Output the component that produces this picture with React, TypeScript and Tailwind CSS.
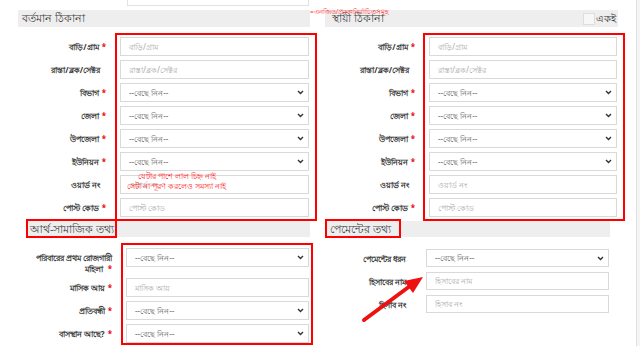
import React from "react";

const FONT = { fontFamily: '"Noto Sans", "DejaVu Sans", sans-serif' };

function Chevron() {
  return (
    <svg width="7" height="5" viewBox="0 0 7 5" className="shrink-0">
      <path d="M1 1 L3.5 3.5 L6 1" fill="none" stroke="#333" strokeWidth="1.4" />
    </svg>
  );
}

function Field({
  label,
  req,
  kind,
  ph,
  labelW,
  inputW,
  h = 19,
  labelClass = "",
}: {
  label: React.ReactNode;
  req?: boolean;
  kind: "input" | "select";
  ph: string;
  labelW: string;
  inputW: string;
  h?: number;
  labelClass?: string;
}) {
  return (
    <div className="flex items-start">
      <div className={`${labelW} shrink-0 text-right pr-[14px] text-[8px] leading-[19px] font-bold text-[#333] ${labelClass}`}>
        {label}
        {req ? <span className="text-[#e00] ml-[3px]">*</span> : <span className="inline-block w-[6px]" />}
      </div>
      {kind === "input" ? (
        <div
          className={`${inputW} border border-[#d9d9d9] bg-white flex items-center px-[8px] text-[8px] text-[#aaa]`}
          style={{ height: h }}
        >
          {ph}
        </div>
      ) : (
        <div
          className={`${inputW} border border-[#d9d9d9] bg-white flex items-center justify-between pl-[8px] pr-[4px] text-[8px] text-[#666]`}
          style={{ height: h }}
        >
          <span>--বেছে নিন--</span>
          <Chevron />
        </div>
      )}
    </div>
  );
}

const addressRows: { label: string; req: boolean; kind: "input" | "select"; ph: string }[] = [
  { label: "বাড়ি/গ্রাম", req: true, kind: "input", ph: "বাড়ি/গ্রাম" },
  { label: "রাস্তা/ব্লক/সেক্টর", req: false, kind: "input", ph: "রাস্তা/ব্লক/সেক্টর" },
  { label: "বিভাগ", req: true, kind: "select", ph: "" },
  { label: "জেলা", req: true, kind: "select", ph: "" },
  { label: "উপজেলা", req: true, kind: "select", ph: "" },
  { label: "ইউনিয়ন", req: true, kind: "select", ph: "" },
  { label: "ওয়ার্ড নং", req: false, kind: "input", ph: "ওয়ার্ড নং" },
  { label: "পোস্ট কোড", req: true, kind: "input", ph: "পোস্ট কোড" },
];

export default function App() {
  return (
    <div className="relative w-[640px] h-[346px] overflow-hidden bg-white flex" style={FONT}>
      <div className="flex-1 flex flex-col">
        {/* top section */}
        <div className="flex pl-[18px] gap-[15px]">
          {/* left column */}
          <div className="w-[292px] flex flex-col">
            <div className="h-[6px] ml-[109px] w-[182px] border-x border-b border-[#e2e2e2]" />
            <div className="mt-[4px] h-[17px] bg-[#eeeeee] pl-[4px] text-[10.5px] leading-[17px] text-[#444]">
              বর্তমান ঠিকানা
            </div>
            <div className="mt-[10px] flex flex-col gap-[4px]">
              {addressRows.map((r) => (
                <Field key={r.label} {...r} labelW="w-[102px]" inputW="w-[189px]" />
              ))}
            </div>
          </div>
          {/* right column */}
          <div className="w-[293px] flex flex-col">
            <div className="h-[6px]" />
            <div className="mt-[4px] h-[17px] bg-[#eeeeee] pl-[7px] pr-[2px] text-[10.5px] leading-[17px] text-[#444] flex items-center">
              <span className="flex-1">স্থায়ী ঠিকানা</span>
              <span className="w-[12px] h-[12px] border border-[#ddd] bg-[#f7f7f7] mr-[1px]" />
              <span className="text-[10px] text-[#333]">একই</span>
            </div>
            <div className="mt-[10px] flex flex-col gap-[4px]">
              {addressRows.map((r) => (
                <Field key={r.label} {...r} labelW="w-[104px]" inputW="w-[188px]" />
              ))}
            </div>
          </div>
        </div>

        {/* bottom section */}
        <div className="flex mt-[4px] pl-[26px] gap-[15px]">
          <div className="w-[284px] flex flex-col">
            <div className="h-[16px] bg-[#eeeeee] pl-[4px] text-[10.5px] leading-[16px] text-[#444] whitespace-nowrap">
              আর্থ-সামাজিক তথ্য
            </div>
            <div className="mt-[11px] flex flex-col">
              <div className="flex items-start h-[30px]">
                <div className="w-[100px] shrink-0 text-right pr-[14px] pt-[4px] text-[8px] leading-[11px] font-bold text-[#333]">
                  পরিবারের প্রথম রোজগারী<br />মহিলা <span className="text-[#e00] ml-[3px]">*</span>
                </div>
                <div className="w-[183px] h-[19px] border border-[#d9d9d9] bg-white flex items-center justify-between pl-[8px] pr-[4px] text-[8px] text-[#666]">
                  <span>--বেছে নিন--</span>
                  <Chevron />
                </div>
              </div>
              <div className="flex flex-col gap-[4px]">
                <Field label="মাসিক আয়" req kind="input" ph="মাসিক আয়" labelW="w-[100px]" inputW="w-[183px]" />
                <Field label="প্রতিবন্ধী" req kind="select" ph="" labelW="w-[100px]" inputW="w-[183px]" />
                <Field label="বাসস্থান আছে?" req kind="select" ph="" labelW="w-[100px]" inputW="w-[183px]" />
              </div>
            </div>
          </div>
          <div className="w-[285px] flex flex-col">
            <div className="h-[16px] bg-[#eeeeee] pl-[5px] text-[10.5px] leading-[16px] text-[#444] whitespace-nowrap">
              পেমেন্টের তথ্য
            </div>
            <div className="mt-[12px] flex flex-col gap-[4px]">
              <Field label="পেমেন্টের ধরন" kind="select" ph="" labelW="w-[101px]" inputW="w-[183px]" h={18} />
              <Field label="হিসাবের নাম" kind="input" ph="হিসাবের নাম" labelW="w-[101px]" inputW="w-[183px]" h={18} />
              <Field label="হিসাব নং" kind="input" ph="হিসাব নং" labelW="w-[101px]" inputW="w-[183px]" h={18} />
            </div>
          </div>
        </div>
      </div>
      <div className="w-[4px] border-l border-[#e0e0e0] bg-[#f5f5f5]" />

      {/* annotations */}
      <div className="absolute left-[115px] top-[33px] w-[202px] h-[188px] border-2 border-[#ff0000] pointer-events-none" />
      <div className="absolute left-[423px] top-[33px] w-[202px] h-[188px] border-2 border-[#ff0000] pointer-events-none" />
      <div className="absolute left-[26px] top-[219px] w-[91px] h-[19px] border-2 border-[#ff0000] pointer-events-none" />
      <div className="absolute left-[325px] top-[219px] w-[76px] h-[19px] border-2 border-[#ff0000] pointer-events-none" />
      <div className="absolute left-[121px] top-[243px] w-[192px] h-[102px] border-2 border-[#ff0000] pointer-events-none" />
      <div className="absolute left-[310px] top-[8px] text-[6.5px] leading-[7px] text-[#ff3333] whitespace-nowrap">
        =এনজিও/প্রকল্পনির্বাচিতসমূহ
      </div>
      <div className="absolute left-[127px] top-[171px] text-[8px] leading-[10px] text-[#ff2222] whitespace-nowrap">
        <div className="pl-[11px]">যেটার পাশে লাল চিহ্ন নাই</div>
        <div>সেটা না পূরণ করলেও সমস্যা নাই</div>
      </div>
      <svg className="absolute left-0 top-0 pointer-events-none" width="640" height="346">
        <line x1="364" y1="320" x2="410" y2="286" stroke="#ee1111" strokeWidth="4" strokeLinecap="round" />
        <polygon points="423,277 404,281 413,293" fill="#ee1111" />
      </svg>
    </div>
  );
}
